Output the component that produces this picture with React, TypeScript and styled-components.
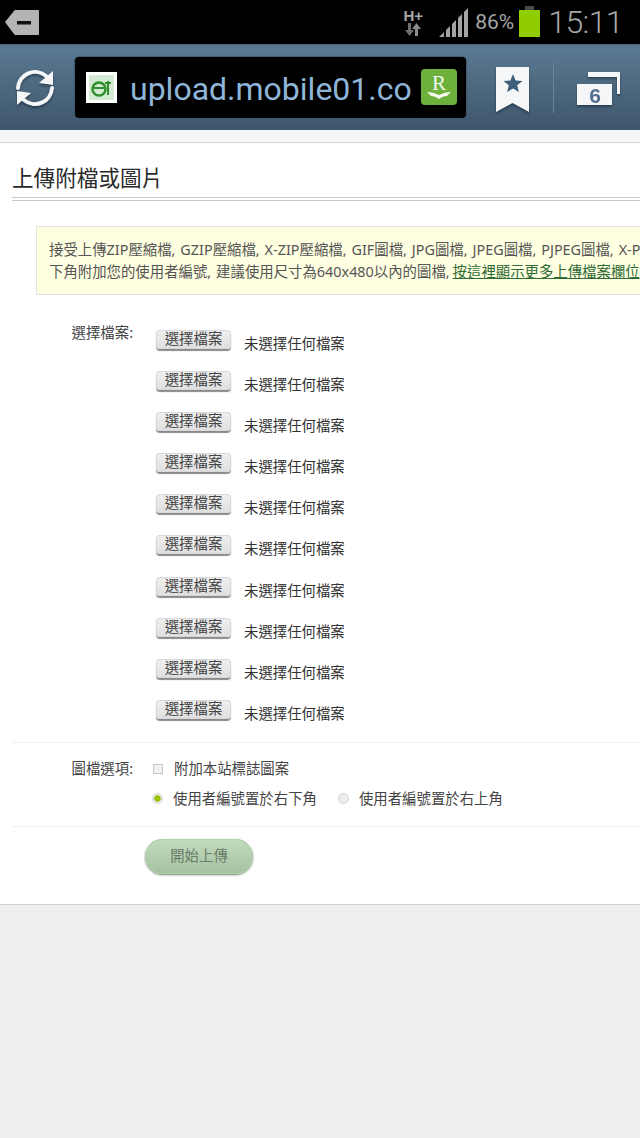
import * as React from "react";
import styled, { createGlobalStyle } from "styled-components";

const CJK = `"Noto Sans", "Noto Sans CJK TC", sans-serif`;

const GlobalStyle = createGlobalStyle`
  html, body {
    margin: 0;
    padding: 0;
    background: #eeeeee;
  }
  body {
    width: 640px;
    height: 1138px;
    overflow: hidden;
    font-family: ${CJK};
  }
`;

const StatusBar = styled.div`
  height: 44px;
  background: #000;
  display: flex;
  align-items: center;
  padding: 0 0 0 4px;
  box-sizing: border-box;
`;

const StatusRight = styled.div`
  margin-left: auto;
  display: flex;
  align-items: center;
  height: 44px;
`;

const NetworkType = styled.div`
  width: 24px;
  margin-right: 14px;
  display: flex;
  flex-direction: column;
  align-items: center;
`;

const NetworkLabel = styled.span`
  color: #a8a8a8;
  font: 700 15px/15px "Liberation Sans", sans-serif;
  margin-top: 1px;
`;

const Percent = styled.span`
  color: #a6a6a6;
  font: 400 21px/44px "Roboto", sans-serif;
  margin: 0 5px 0 6px;
`;

const Clock = styled.span`
  color: #a6a6a6;
  font: 300 32px/44px "Roboto", sans-serif;
  letter-spacing: -0.6px;
  margin: 0 17px 0 8px;
`;

const Toolbar = styled.div`
  height: 86px;
  background: linear-gradient(#5b7a92, #3e566c);
  border-top: 1px solid #46627a;
  box-sizing: border-box;
  display: flex;
  align-items: center;
  padding: 0 0 0 14px;
`;

const AddressBar = styled.div`
  width: 391px;
  height: 61px;
  margin-left: 19px;
  margin-top: -1px;
  background: #000;
  border-radius: 4px;
  box-sizing: border-box;
  box-shadow: 0 0 1px 1px #3f5a72;
  display: flex;
  align-items: center;
  padding: 0 9px 0 11px;
`;

const Favicon = styled.div`
  width: 31px;
  height: 31px;
  flex: none;
  background: #fff;
  display: flex;
  align-items: center;
  justify-content: center;
`;

const UrlText = styled.span`
  color: #8fb6d9;
  font: 400 32px/61px "Roboto", sans-serif;
  margin-left: 13px;
  padding-top: 4px;
  white-space: nowrap;
  flex: 1;
`;

const ToolbarDivider = styled.div`
  width: 1px;
  height: 50px;
  background: #6c8497;
  margin: 0 23px 0 24px;
`;

const BookmarkSlot = styled.div`
  margin-left: 30px;
  margin-top: 3px;
  display: flex;
`;

const ShadowIcon = styled.svg`
  flex: none;
  filter: drop-shadow(0 2px 1px rgba(20, 35, 50, 0.55));
`;

const TabsIcon = styled(ShadowIcon)`
  margin-top: 3px;
`;

const TopStrip = styled.div`
  height: 12px;
  background: #f6f6f6;
  border-bottom: 1px solid #d0d0d0;
`;

const Panel = styled.div`
  height: 762px;
  background: #fff;
  border-bottom: 1px solid #cfcfcf;
  box-sizing: border-box;
  overflow: hidden;
  padding-left: 12px;
`;

const Title = styled.h1`
  margin: 0;
  height: 58px;
  box-sizing: border-box;
  padding-top: 21px;
  font: 400 21.6px/28px ${CJK};
  color: #2a2a2a;
  border-bottom: 4px double #c8c8c8;
`;

const Notice = styled.div`
  margin: 25px 0 0 24px;
  height: 69px;
  box-sizing: border-box;
  background: #ffffe1;
  border: 1px solid #e2e2e2;
  border-right: 0;
  padding: 12px 0 0 12px;
  font: 400 14.4px/22px ${CJK};
  word-spacing: 1.2px;
  color: #555;
  white-space: nowrap;
  overflow: hidden;
`;

const NoticeLink = styled.a`
  color: #2f6b35;
  text-decoration: underline;
  margin-left: -2px;
`;

const FileSection = styled.div`
  display: grid;
  grid-template-columns: 121px 1fr;
  padding: 29px 0 22px 0;
  border-bottom: 1px solid #efefef;
`;

const FieldLabel = styled.div`
  text-align: right;
  font: 400 14.4px/18px ${CJK};
  color: #444;
`;

const FileList = styled.div`
  padding-left: 23px;
  display: flex;
  flex-direction: column;
  gap: 21.1px;
  margin-top: 6px;
`;

const FileRow = styled.div`
  display: flex;
  height: 20px;
`;

const FileButton = styled.button`
  width: 75px;
  height: 19px;
  padding: 0 0 2px;
  box-sizing: border-box;
  border: 0;
  border-radius: 4px;
  background: linear-gradient(#f0f0f0, #dedede);
  box-shadow: inset 0 0 0 1px #d8d8d8, 0 2px 1px #8a8a8a;
  font: 400 14.4px/17px ${CJK};
  color: #444;
`;

const FileStatus = styled.span`
  margin-left: 13px;
  padding-top: 5px;
  font: 400 14.4px/18px ${CJK};
  color: #333;
  white-space: nowrap;
`;

const OptionSection = styled.div`
  display: grid;
  grid-template-columns: 121px 1fr;
  padding: 17px 0 18px 0;
  border-bottom: 1px solid #efefef;
`;

const OptionList = styled.div`
  padding-left: 17px;
  display: flex;
  flex-direction: column;
  gap: 12px;
`;

const OptionRow = styled.div`
  display: flex;
  align-items: center;
  height: 18px;
  font: 400 14.4px/18px ${CJK};
  color: #444;
`;

const CheckBox = styled.span`
  width: 10px;
  height: 10px;
  flex: none;
  box-sizing: border-box;
  background: #f0f0f0;
  border: 1px solid #c8c8c8;
  margin: 0 11px 0 3px;
`;

const Radio = styled.span<{ $checked?: boolean }>`
  width: 11px;
  height: 11px;
  flex: none;
  box-sizing: border-box;
  border-radius: 50%;
  border: 1px solid #d2d2d2;
  background: ${(p) => (p.$checked ? "radial-gradient(circle, #9ac30a 0 3px, #eee 3.5px)" : "#ededed")};
  margin: 0 10px 0 2px;
`;

const OptionText = styled.span<{ $gap?: number }>`
  margin-right: ${(p) => p.$gap ?? 0}px;
`;

const SubmitArea = styled.div`
  padding: 12px 0 0 133px;
`;

const SubmitButton = styled.button`
  width: 108px;
  height: 35px;
  padding: 0;
  border: 0;
  border-radius: 17.5px;
  background: linear-gradient(#c2dcbe, #a3c19f);
  box-shadow: inset 0 0 0 1px #b2cfae, 0 1px 2px #6f826d;
  font: 400 14.4px/18px ${CJK};
  color: #6b7a6a;
`;

const RefreshIcon = () => (
  <ShadowIcon width="42" height="42" viewBox="0 0 42 42">
    <g fill="none" stroke="#f4f6f7" strokeWidth="4" strokeLinecap="round">
      <path d="M4 21a17 17 0 0 1 28-12" />
      <path d="M38 21a17 17 0 0 1-28 12" />
    </g>
    <path d="M39 4l0 14-14-2z" fill="#f4f6f7" />
    <path d="M3 38l0-14 14 2z" fill="#f4f6f7" />
  </ShadowIcon>
);

const Page: React.FC = () => {
  const rows = Array.from({ length: 10 }, (_, i) => i);
  return (
    <>
      <StatusBar>
        <svg width="36" height="30" viewBox="0 0 36 30">
          <path d="M1 15L10 4a2 2 0 0 1 1-1h23a1 1 0 0 1 1 1v23a1 1 0 0 1-1 1H11a2 2 0 0 1-1-1z" fill="#b4b4b4" />
          <rect x="13" y="14" width="14" height="3.5" fill="#111" />
        </svg>
        <StatusRight>
          <NetworkType>
            <NetworkLabel>H+</NetworkLabel>
            <svg width="20" height="14" viewBox="0 0 20 14">
              <path d="M5 0h3v7h3l-4.5 6L2 7h3z" fill="#6f6f6f" />
              <path d="M12 13h3V6h3l-4.500-6L9 6h3z" fill="#8a8a8a" />
            </svg>
          </NetworkType>
          <svg width="30" height="30" viewBox="0 0 30 30">
            <path d="M0 30l5-5v5zM7 23l4-4v11H7zM13 17l4-4v17h-4zM19 11l4-4v23h-4zM25 5l4-4v29h-4z" fill="#a4a4a4" />
          </svg>
          <Percent>86%</Percent>
          <svg width="21" height="32" viewBox="0 0 21 32">
            <rect x="6" y="0" width="9" height="4" fill="#4a4a4a" />
            <rect x="0" y="4" width="21" height="27" fill="#8fcc00" />
          </svg>
          <Clock>15:11</Clock>
        </StatusRight>
      </StatusBar>
      <Toolbar>
        <RefreshIcon />
        <AddressBar>
          <Favicon>
            <svg width="25" height="25" viewBox="0 0 25 25">
              <rect width="25" height="25" fill="#d5ead2" />
              <circle cx="10" cy="14" r="6.500" fill="none" stroke="#2f8f2f" strokeWidth="2.500" />
              <path d="M5 13h10M19 6v14M16 8h6" stroke="#2f8f2f" strokeWidth="2" fill="none" />
            </svg>
          </Favicon>
          <UrlText>upload.mobile01.co</UrlText>
          <svg width="36" height="36" viewBox="0 0 36 36">
            <rect width="36" height="36" rx="4" fill="#6db03c" />
            <text x="18" y="21" textAnchor="middle" fontFamily="Liberation Serif, serif" fontSize="21" fill="#f4f8ee">R</text>
            <path d="M6 23c4 0 8 1 12 3c4-2 8-3 12-3l-4 4c-3 0-5 1-8 3c-3-2-5-3-8-3z" fill="#f4f8ee" />
          </svg>
        </AddressBar>
        <BookmarkSlot>
          <ShadowIcon width="33" height="45" viewBox="0 0 33 45">
            <path d="M0 0h33v45l-16.500-9L0 45z" fill="#f4f6f8" />
            <path d="M17 7l2.600 6.400 6.900.5-5.300 4.400 1.700 6.700-5.900-3.600-5.900 3.600 1.700-6.700-5.300-4.400 6.900-.5z" fill="#3f5f7c" />
          </ShadowIcon>
        </BookmarkSlot>
        <ToolbarDivider />
        <TabsIcon width="44" height="35" viewBox="0 0 44 35">
          <path d="M11 0h32v22h-3V5H11z" fill="#f4f6f8" />
          <rect x="0" y="12" width="35" height="21" fill="#f4f6f8" />
          <text x="18" y="31" textAnchor="middle" fontFamily="Liberation Sans, sans-serif" fontWeight="700" fontSize="21" fill="#54728f">6</text>
        </TabsIcon>
      </Toolbar>
      <TopStrip />
      <Panel>
        <Title>上傳附檔或圖片</Title>
        <Notice>
          接受上傳ZIP壓縮檔, GZIP壓縮檔, X-ZIP壓縮檔, GIF圖檔, JPG圖檔, JPEG圖檔, PJPEG圖檔, X-PNG圖檔, PNG圖檔
          <br />
          下角附加您的使用者編號, 建議使用尺寸為640x480以內的圖檔, <NoticeLink>按這裡顯示更多上傳檔案欄位</NoticeLink>
        </Notice>
        <FileSection>
          <FieldLabel>選擇檔案:</FieldLabel>
          <FileList>
            {rows.map((i) => (
              <FileRow key={i}>
                <FileButton>選擇檔案</FileButton>
                <FileStatus>未選擇任何檔案</FileStatus>
              </FileRow>
            ))}
          </FileList>
        </FileSection>
        <OptionSection>
          <FieldLabel>圖檔選項:</FieldLabel>
          <OptionList>
            <OptionRow>
              <CheckBox />
              <OptionText>附加本站標誌圖案</OptionText>
            </OptionRow>
            <OptionRow>
              <Radio $checked />
              <OptionText $gap={19}>使用者編號置於右下角</OptionText>
              <Radio />
              <OptionText>使用者編號置於右上角</OptionText>
            </OptionRow>
          </OptionList>
        </OptionSection>
        <SubmitArea>
          <SubmitButton>開始上傳</SubmitButton>
        </SubmitArea>
      </Panel>
    </>
  );
};

export default function App() {
  return (
    <>
      <GlobalStyle />
      <Page />
    </>
  );
}
